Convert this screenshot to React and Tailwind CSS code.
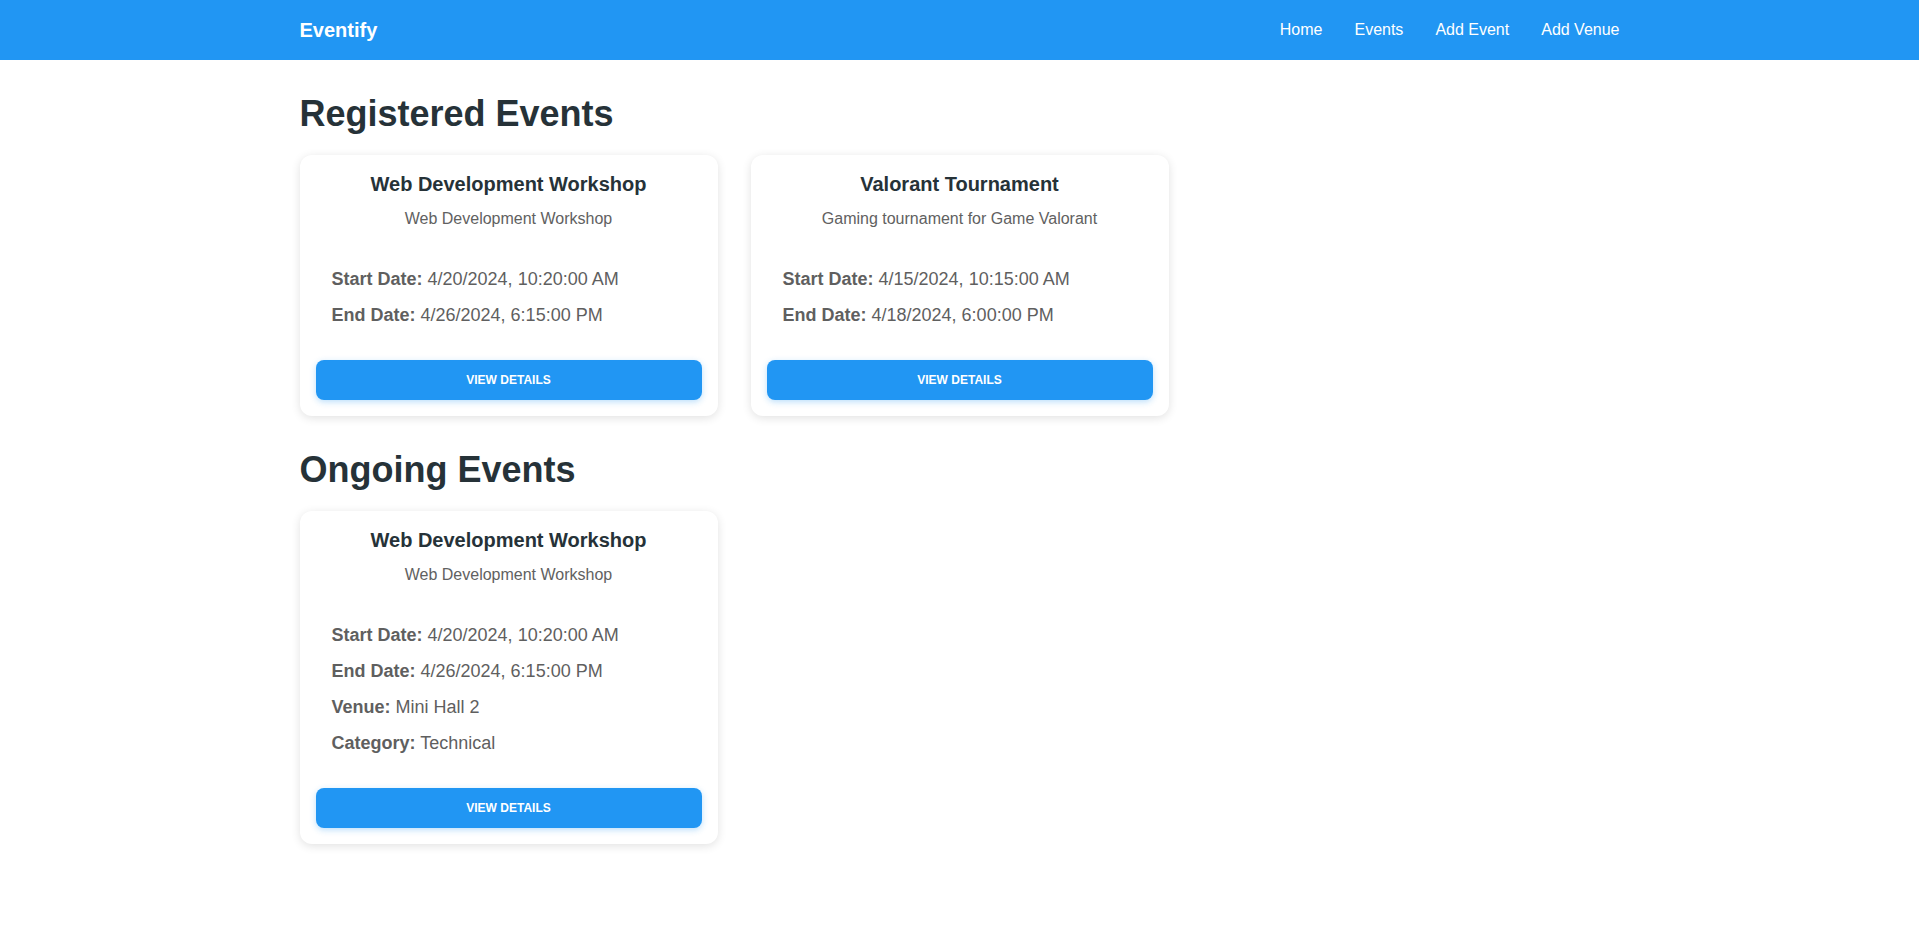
import React from 'react';

const registered = [
  {
    id: 1,
    title: 'Web Development Workshop',
    description: 'Web Development Workshop',
    start: '4/20/2024, 10:20:00 AM',
    end: '4/26/2024, 6:15:00 PM',
  },
  {
    id: 2,
    title: 'Valorant Tournament',
    description: 'Gaming tournament for Game Valorant',
    start: '4/15/2024, 10:15:00 AM',
    end: '4/18/2024, 6:00:00 PM',
  },
];

const ongoing = [
  {
    id: 1,
    title: 'Web Development Workshop',
    description: 'Web Development Workshop',
    start: '4/20/2024, 10:20:00 AM',
    end: '4/26/2024, 6:15:00 PM',
    venue: 'Mini Hall 2',
    category: 'Technical',
  },
];

function Detail({ label, value }) {
  return (
    <p className="h-9 leading-9 text-[18px] text-[#5f5f5f]">
      <span className="font-bold">{label}:</span> {value}
    </p>
  );
}

function EventCard({ event }) {
  return (
    <div className="w-[418px] bg-white rounded-xl shadow-[0_2px_10px_rgba(0,0,0,0.12)] px-4 pt-[17px] pb-4">
      <h3 className="text-center text-[20px] leading-6 font-bold text-[#263238]">{event.title}</h3>
      <p className="mt-[11px] text-center text-[16px] leading-6 text-[#616161]">{event.description}</p>
      <div className="px-4 mt-[30px]">
        <Detail label="Start Date" value={event.start} />
        <Detail label="End Date" value={event.end} />
        {event.venue && <Detail label="Venue" value={event.venue} />}
        {event.category && <Detail label="Category" value={event.category} />}
      </div>
      <button className="mt-[27px] w-full h-10 rounded-lg bg-[#2196f3] text-white text-[12px] font-bold uppercase shadow-[0_2px_6px_rgba(33,150,243,0.3)]">
        View Details
      </button>
    </div>
  );
}

function Section({ title, events }) {
  return (
    <section className="mt-8">
      <h2 className="text-[36px] leading-[44px] font-bold text-[#263238] mb-[19px]">{title}</h2>
      <div className="flex flex-wrap gap-[33px]">
        {events.map((e) => (
          <EventCard key={e.id} event={e} />
        ))}
      </div>
    </section>
  );
}

export default function App() {
  return (
    <div className="min-h-screen bg-white font-['Liberation_Sans',Arial,sans-serif]">
      <nav className="h-[60px] bg-[#2196f3] text-white">
        <div className="max-w-[1320px] mx-auto h-full flex items-center justify-between">
          <span className="text-[20px] font-bold">Eventify</span>
          <div className="flex items-center gap-8 text-[16px]">
            <a href="#">Home</a>
            <a href="#">Events</a>
            <a href="#">Add Event</a>
            <a href="#">Add Venue</a>
          </div>
        </div>
      </nav>
      <main className="max-w-[1320px] mx-auto">
        <Section title="Registered Events" events={registered} />
        <Section title="Ongoing Events" events={ongoing} />
      </main>
    </div>
  );
}
